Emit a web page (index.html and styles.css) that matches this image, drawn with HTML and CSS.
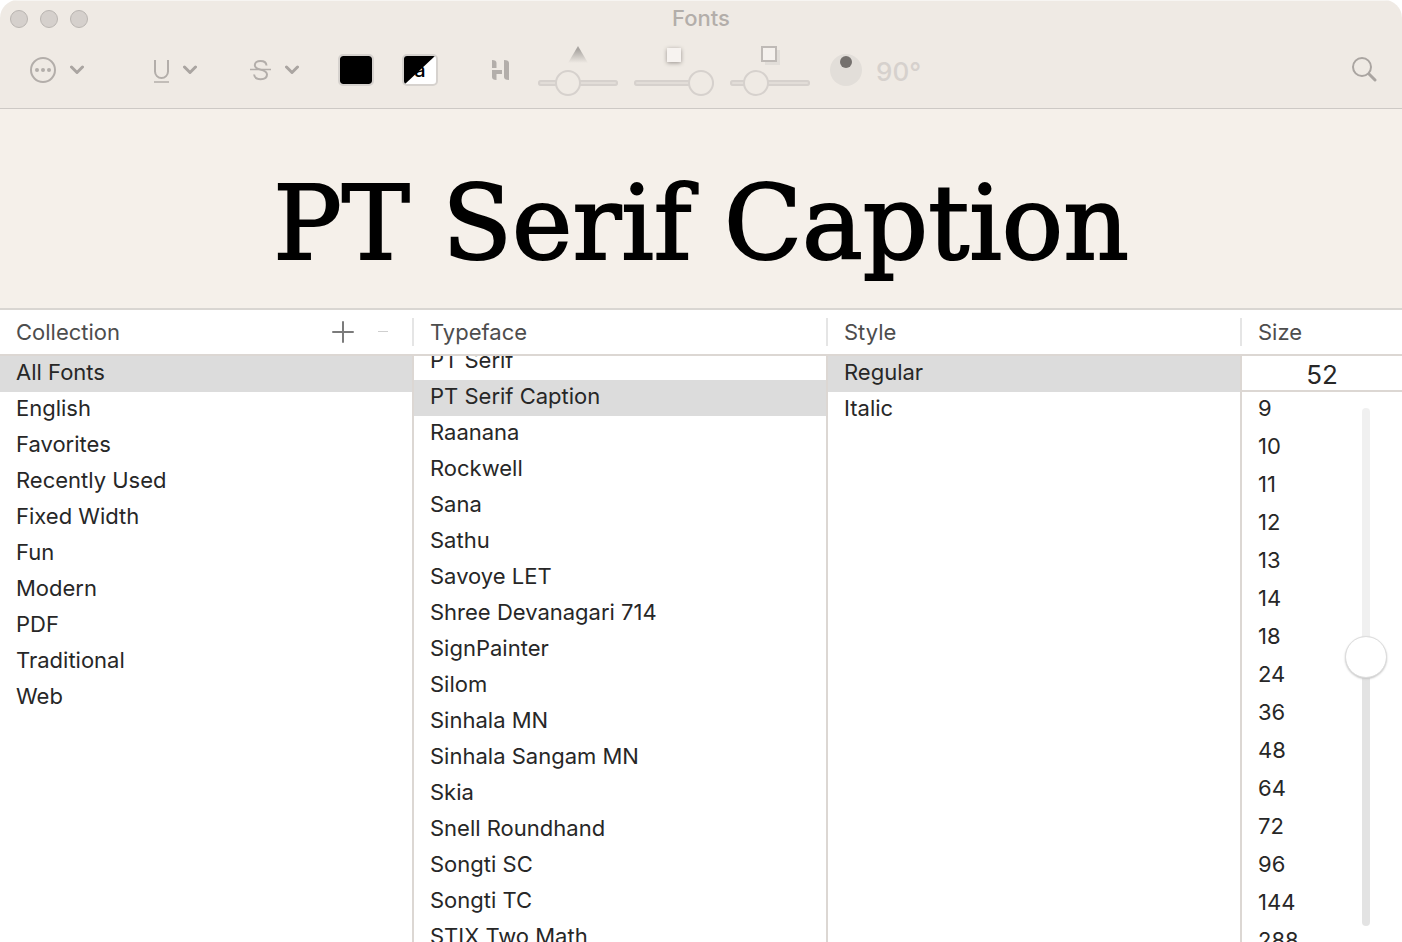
FILE: index.html
```html
<!DOCTYPE html>
<html lang="en">
<head>
<meta charset="utf-8">
<title>Fonts</title>
<link rel="stylesheet" href="styles.css">
</head>
<body>
<main class="window">
  <header class="chrome">
    <div class="titlebar">
      <div class="lights">
        <button class="light" aria-label="Close"></button>
        <button class="light" aria-label="Minimize"></button>
        <button class="light" aria-label="Zoom"></button>
      </div>
      <h1 class="title">Fonts</h1>
    </div>
    <div class="toolbar">
      <div class="menus">
        <button class="menu menu-actions" aria-label="Actions">
          <svg width="26" height="26" viewBox="0 0 26 26"><circle cx="13" cy="13" r="12" fill="none" stroke="currentColor" stroke-width="2"/><circle cx="7" cy="13" r="2" fill="currentColor"/><circle cx="13" cy="13" r="2" fill="currentColor"/><circle cx="19" cy="13" r="2" fill="currentColor"/></svg>
          <svg width="14" height="10" viewBox="0 0 14 10"><path d="M1.5 2 7 7.5 12.5 2" class="chevron"/></svg>
        </button>
        <button class="menu menu-underline" aria-label="Underline">
          <svg width="17" height="26" viewBox="0 0 17 26"><path d="M2 3v11.500a6.500 6.500 0 0 0 13 0V3" fill="none" stroke="currentColor" stroke-width="2"/><path d="M1 25h15" stroke="currentColor" stroke-width="1.500"/></svg>
          <svg width="14" height="10" viewBox="0 0 14 10"><path d="M1.500 2 7 7.500 12.500 2" class="chevron"/></svg>
        </button>
        <button class="menu" aria-label="Strikethrough">
          <svg width="21" height="26" viewBox="0 0 21 26"><path d="M16.500 8.500C16.300 5.700 14 4 10.500 4 7.200 4 4.800 5.700 4.800 8.300c0 2.400 1.800 3.400 5.700 4.300 4.300 1 6.500 2.100 6.500 4.900 0 2.900-2.500 4.700-6.300 4.700-3.900 0-6.300-1.800-6.600-4.700" fill="none" stroke="currentColor" stroke-width="2"/><path d="M0 12.500h21" stroke="currentColor" stroke-width="1.500"/></svg>
          <svg width="14" height="10" viewBox="0 0 14 10"><path d="M1.500 2 7 7.500 12.500 2" class="chevron"/></svg>
        </button>
      </div>
      <div class="swatches">
        <button class="swatch swatch-text" aria-label="Text color"></button>
        <button class="swatch swatch-paper" aria-label="Document color">
          <span class="swatch-letter">a</span>
          <svg class="swatch-corner" width="32" height="28" viewBox="0 0 32 28"><path d="M0 0h31L1 28H0Z"/></svg>
        </button>
      </div>
      <button class="shadow-toggle" aria-label="Text shadow">
        <svg width="18" height="20" viewBox="0 0 18 20" fill="currentColor"><path d="M1 0q4.500 0 4.500 3v5H1ZM13 0q5 0 5 3v17q-5 0-5-3ZM1 10h10v4H5.500v6Q1 20 1 17Z"/></svg>
      </button>
      <div class="sliders">
        <label class="slider-group">
          <svg width="20" height="20" viewBox="0 0 20 20"><defs><linearGradient id="fade" x1="0" y1="0" x2="0" y2="1"><stop offset="0.200" stop-color="#a9a5a1"/><stop offset="1" stop-color="#efeae4"/></linearGradient></defs><path d="M10 1 20 18H0Z" fill="url(#fade)"/></svg>
          <input class="slider" type="range" value="32" aria-label="Shadow opacity">
        </label>
        <label class="slider-group">
          <span class="icon-box"><span class="blur-icon"></span></span>
          <input class="slider" type="range" value="100" aria-label="Shadow blur">
        </label>
        <label class="slider-group">
          <svg width="20" height="20" viewBox="0 0 20 20"><path d="M5 5h15v15H5Z" fill="#e2ded9"/><path d="M2 2h14v14H2Z" fill="#f5f1ed" stroke="#bfbab6" stroke-width="2"/></svg>
          <input class="slider" type="range" value="24" aria-label="Shadow offset">
        </label>
      </div>
      <div class="angle">
        <button class="dial" aria-label="Shadow angle"><svg width="32" height="32" viewBox="0 0 32 32"><circle cx="16" cy="16" r="16" fill="#e2ded9"/><circle cx="16" cy="8" r="6" fill="#75716e"/></svg></button>
        <input class="angle-value" type="text" value="90°" aria-label="Angle">
      </div>
      <button class="search" aria-label="Search">
        <svg width="26" height="26" viewBox="0 0 26 26" fill="none" stroke="currentColor"><circle cx="11" cy="11" r="9" stroke-width="2"/><path d="m18 18 6 6" stroke-width="3" stroke-linecap="round"/></svg>
      </button>
    </div>
  </header>

  <section class="preview" aria-label="Preview">PT Serif Caption</section>

  <div class="browser">
    <section class="column">
      <header class="column-head">
        <h2 class="column-title">Collection</h2>
        <button class="head-button" aria-label="Add collection"><svg width="22" height="22" viewBox="0 0 22 22"><path d="M11 1v20M1 11h20" stroke="#7b7b7b" stroke-width="2" stroke-linecap="round"/></svg></button>
        <button class="head-button head-remove" aria-label="Remove collection"><svg width="10" height="22" viewBox="0 0 10 22"><path d="M0 10.500h10" stroke="#cfcfcf"/></svg></button>
      </header>
      <ul class="list">
        <li><button class="row selected">All Fonts</button></li>
        <li><button class="row">English</button></li>
        <li><button class="row">Favorites</button></li>
        <li><button class="row">Recently Used</button></li>
        <li><button class="row">Fixed Width</button></li>
        <li><button class="row">Fun</button></li>
        <li><button class="row">Modern</button></li>
        <li><button class="row">PDF</button></li>
        <li><button class="row">Traditional</button></li>
        <li><button class="row">Web</button></li>
      </ul>
    </section>

    <section class="column">
      <header class="column-head"><h2 class="column-title">Typeface</h2></header>
      <ul class="list">
        <li class="scrolled"><button class="row">PT Serif</button></li>
        <li><button class="row selected">PT Serif Caption</button></li>
        <li><button class="row">Raanana</button></li>
        <li><button class="row">Rockwell</button></li>
        <li><button class="row">Sana</button></li>
        <li><button class="row">Sathu</button></li>
        <li><button class="row">Savoye LET</button></li>
        <li><button class="row">Shree Devanagari 714</button></li>
        <li><button class="row">SignPainter</button></li>
        <li><button class="row">Silom</button></li>
        <li><button class="row">Sinhala MN</button></li>
        <li><button class="row">Sinhala Sangam MN</button></li>
        <li><button class="row">Skia</button></li>
        <li><button class="row">Snell Roundhand</button></li>
        <li><button class="row">Songti SC</button></li>
        <li><button class="row">Songti TC</button></li>
        <li><button class="row">STIX Two Math</button></li>
      </ul>
    </section>

    <section class="column">
      <header class="column-head"><h2 class="column-title">Style</h2></header>
      <ul class="list">
        <li><button class="row selected">Regular</button></li>
        <li><button class="row">Italic</button></li>
      </ul>
    </section>

    <section class="column column-size">
      <header class="column-head"><h2 class="column-title">Size</h2></header>
      <input class="size-field" type="text" value="52" aria-label="Font size">
      <div class="size-body">
        <ul class="sizes">
          <li><button class="row row-size">9</button></li>
          <li><button class="row row-size">10</button></li>
          <li><button class="row row-size">11</button></li>
          <li><button class="row row-size">12</button></li>
          <li><button class="row row-size">13</button></li>
          <li><button class="row row-size">14</button></li>
          <li><button class="row row-size">18</button></li>
          <li><button class="row row-size">24</button></li>
          <li><button class="row row-size">36</button></li>
          <li><button class="row row-size">48</button></li>
          <li><button class="row row-size">64</button></li>
          <li><button class="row row-size">72</button></li>
          <li><button class="row row-size">96</button></li>
          <li><button class="row row-size">144</button></li>
          <li><button class="row row-size">288</button></li>
        </ul>
        <div class="size-slider-box"><input class="size-slider" type="range" value="52" aria-label="Font size slider"></div>
      </div>
    </section>
  </div>
</main>
</body>
</html>
```
FILE: styles.css
```css
* {
  box-sizing: border-box;
}

body {
  margin: 0;
  background: #fff;
  color: #272727;
  font: 22px/32px Inter, "Liberation Sans", sans-serif;
}

button,
input {
  margin: 0;
  padding: 0;
  border: 0;
  background: none;
  color: inherit;
  font: inherit;
}

svg {
  display: block;
  flex: none;
}

h1,
h2,
ul {
  margin: 0;
  padding: 0;
  font: inherit;
  list-style: none;
}

.window {
  display: flex;
  flex-direction: column;
  height: 100vh;
  overflow: hidden;
  border-radius: 18px 18px 0 0;
}

/* Title bar and toolbar */

.chrome {
  flex: none;
  border-bottom: 1px solid #cdc9c5;
  background: #efeae4;
  box-shadow: inset 0 1px #f7f5f2;
  color: #b3aeaa;
}

.titlebar {
  display: grid;
  grid-template-columns: 1fr auto 1fr;
  align-items: center;
  height: 37px;
  padding: 0 10px;
}

.title {
  padding-bottom: 2px;
  font-weight: 500;
}

.lights {
  display: flex;
  gap: 12px;
}

.light {
  width: 18px;
  height: 18px;
  border: 1px solid #b9b5b1;
  border-radius: 50%;
  background: #d5d0cc;
}

.toolbar {
  display: flex;
  align-items: center;
  height: 71px;
  padding: 0 25px 6px 30px;
}

.menus {
  display: flex;
}

.menu {
  display: flex;
  align-items: center;
  gap: 14px;
}

.menu-actions {
  margin-right: 69px;
}

.menu-underline {
  gap: 13px;
  margin-right: 53px;
}

.chevron {
  fill: none;
  stroke: #aaa5a1;
  stroke-width: 3;
  stroke-linecap: round;
  stroke-linejoin: round;
}

.swatches {
  display: flex;
  gap: 28px;
  margin-left: 39px;
}

.swatch {
  position: relative;
  width: 36px;
  height: 32px;
  border: 2px solid #d6d2ce;
  border-radius: 5px;
  overflow: hidden;
}

.swatch-text {
  background: #000;
  background-clip: padding-box;
}

.swatch-paper {
  background: #fff;
  color: #000;
}

.swatch-letter {
  display: block;
  font-size: 20px;
  font-weight: 500;
  line-height: 28px;
}

.swatch-corner {
  position: absolute;
  top: 0;
  left: 0;
}

.shadow-toggle {
  margin-left: 53px;
}

.sliders {
  display: flex;
  gap: 16px;
  margin: 2px 0 0 29px;
}

.slider-group {
  display: flex;
  flex-direction: column;
  align-items: center;
  gap: 5px;
}

.icon-box {
  display: grid;
  place-items: center;
  width: 20px;
  height: 20px;
}

.blur-icon {
  width: 14px;
  height: 14px;
  background: #f7f3f0;
  box-shadow: 0 1px 4px #99938e;
}

.slider {
  width: 80px;
  height: 26px;
  appearance: none;
}

.slider::-webkit-slider-runnable-track {
  height: 6px;
  border-radius: 3px;
  background: #e2ddd8;
  box-shadow: inset 0 0 0 2px #d6d1cd;
}

.slider::-webkit-slider-thumb {
  width: 26px;
  height: 26px;
  margin-top: -10px;
  border: 2px solid #d6d1cd;
  border-radius: 50%;
  background: #efeae4;
  appearance: none;
}

.angle {
  display: flex;
  align-items: center;
  gap: 14px;
  margin-left: 20px;
}

.angle-value {
  width: 60px;
  padding-top: 4px;
  color: #d6d1cd;
  font-size: 26px;
  font-weight: 500;
}

.search {
  margin-left: auto;
  padding-bottom: 2px;
  color: #aaa5a1;
}

/* Preview */

.preview {
  flex: none;
  height: 201px;
  padding-top: 47px;
  border-bottom: 2px solid #d9d6d2;
  background: #f5f0ea;
  color: #000;
  font: 102px/136px "DejaVu Serif", serif;
  text-align: center;
  white-space: nowrap;
  -webkit-text-stroke: 2px #000;
}

/* Browser columns */

.browser {
  display: flex;
  flex: 1;
  min-height: 0;
}

.column {
  display: flex;
  flex: 1;
  flex-direction: column;
  min-width: 0;
}

.column-size {
  flex: 0 0 160px;
}

.column-head {
  display: flex;
  flex: none;
  align-items: center;
  height: 46px;
  padding: 0 26px 0 16px;
  border-bottom: 2px solid #dcd7d3;
  background: linear-gradient(#e5e5e5, #e5e5e5) right center / 2px 28px no-repeat;
}

.column-size .column-head {
  background: none;
}

.column-title {
  margin-right: auto;
  color: #4d4d4d;
}

.head-button {
  margin-bottom: 1px;
}

.head-remove {
  margin-left: 24px;
}

.list {
  flex: 1;
  min-height: 0;
  overflow: hidden;
  border-right: 2px solid #dcd7d3;
}

.scrolled {
  margin-top: -12px;
}

.row {
  display: block;
  width: 100%;
  height: 36px;
  padding: 0 16px 4px;
  text-align: left;
  white-space: nowrap;
}

.row-size {
  height: 38px;
  padding-bottom: 6px;
}

.selected {
  background: #dcdcdc;
}

.size-field {
  flex: none;
  width: 100%;
  height: 36px;
  padding-top: 2px;
  border-bottom: 2px solid #dcd7d3;
  font-size: 26px;
  text-align: center;
}

.size-body {
  display: flex;
  flex: 1;
  min-height: 0;
}

.sizes {
  flex: 1;
  min-height: 0;
  overflow: hidden;
}

.size-slider-box {
  display: flex;
  padding: 16px 15px 16px 0;
}

.size-slider {
  width: 42px;
  height: 100%;
  appearance: none;
  writing-mode: vertical-lr;
  direction: rtl;
}

.size-slider::-webkit-slider-runnable-track {
  width: 8px;
  border-radius: 4px;
  background: linear-gradient(#f0f0f0 48%, #e3e3e3 48%);
}

.size-slider::-webkit-slider-thumb {
  width: 42px;
  height: 42px;
  margin-left: -17px;
  border: 1px solid #dedede;
  border-radius: 50%;
  background: #fff;
  background-clip: padding-box;
  box-shadow: 0 1px 2px #c6c6c6;
  appearance: none;
}
```
